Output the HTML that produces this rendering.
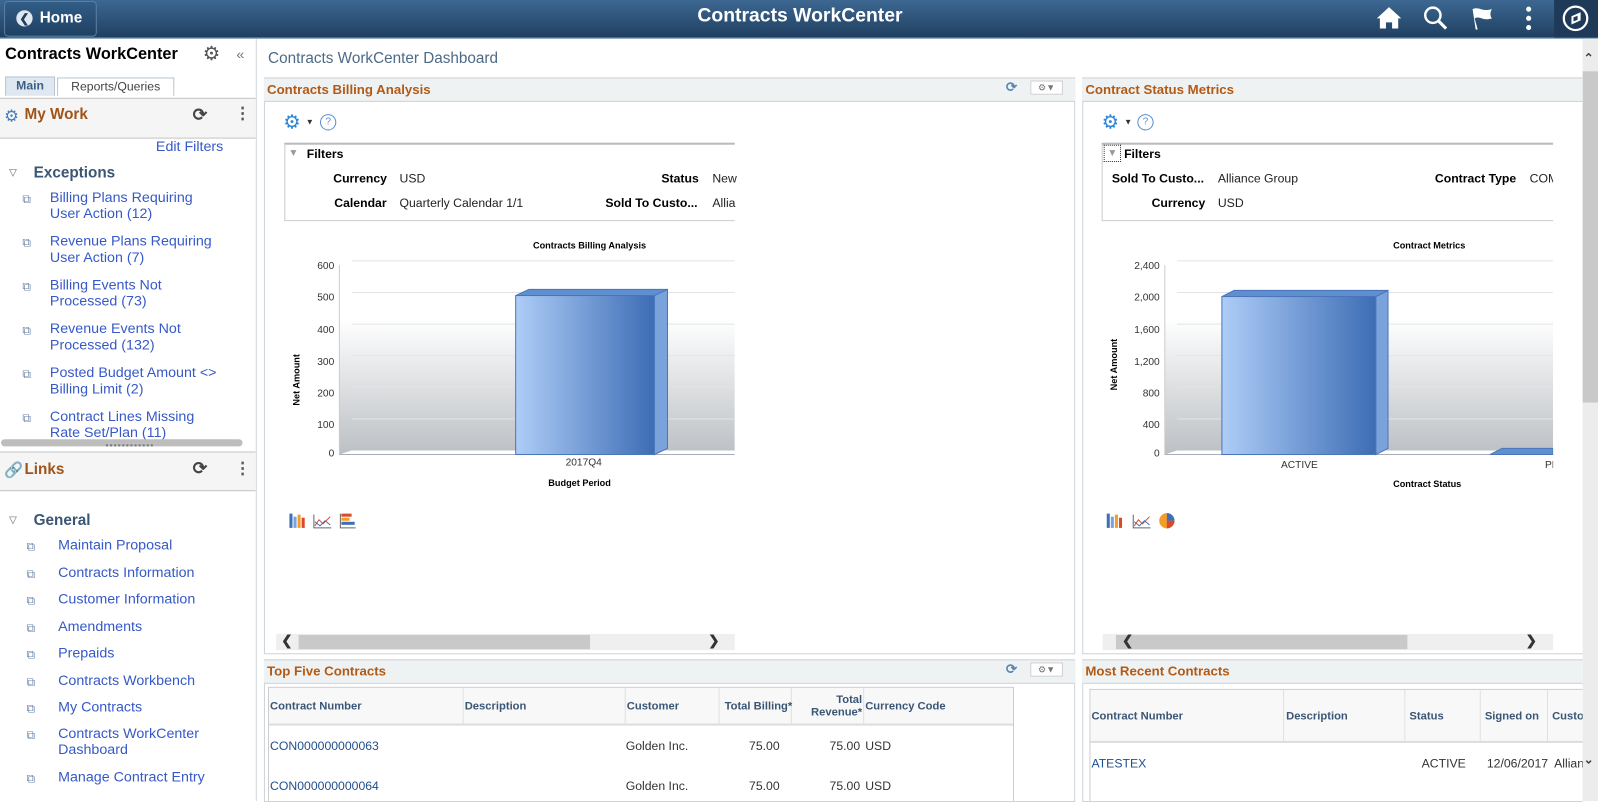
<!DOCTYPE html>
<html><head><meta charset="utf-8">
<style>
*{margin:0;padding:0;box-sizing:border-box}
body{width:1598px;height:786px;overflow:hidden;background:#fff;font-family:"Liberation Sans",Arial,sans-serif;font-size:12px;color:#333;position:relative}
#w{position:absolute;left:0;top:0;width:1568px;height:772px;transform:scale(1.0191);transform-origin:0 0}
.a{position:absolute}
.hdr{left:0;top:0;width:1568px;height:38px;background:linear-gradient(#3d6892,#1f3f60);border-bottom:1px solid #6c8fb0}
.lnk{color:#3659c8;font-size:14px;line-height:16px}
.ph{background:#eff2f3;border-top:1px solid #cfd4d8;border-bottom:1px solid #cfd4d8;color:#b25a15;font-weight:bold;font-size:13px;padding-left:3px;line-height:22px}
.lbl{font-weight:bold;color:#000;font-size:12px}
.v{color:#222;font-size:12px}
.th{font-weight:bold;color:#3a5675;font-size:11px}
.pi{color:#6b86a8;font-size:12px}
</style></head><body><div id="w">
<div class="a hdr"></div>
<div class="a" style="left:4px;top:1px;width:91px;height:35px;border:1px solid #5a7ea3;border-radius:4px;background:linear-gradient(#325d86,#1f4062)"></div>
<div class="a" style="left:16px;top:10px;width:16px;height:16px;border-radius:50%;background:#dfe7ef;color:#1f3f60;font-weight:bold;font-size:12px;line-height:16px;text-align:center">&#10094;</div>
<div class="a" style="left:39px;top:9px;color:#fff;font-weight:bold;font-size:15px">Home</div>
<div class="a" style="left:0;top:5px;width:1570px;text-align:center;color:#fff;font-weight:bold;font-size:19px">Contracts WorkCenter</div>
<svg class="a" style="left:1350px;top:5px" width="26" height="26" viewBox="0 0 26 26"><path d="M13 2L1 13h3v10h6v-6h6v6h6V13h3z" fill="#fff"/></svg>
<svg class="a" style="left:1396px;top:5px" width="26" height="26"><circle cx="10" cy="10" r="7.5" stroke="#fff" stroke-width="2.4" fill="none"/><path d="M15.5 15.5L23 23" stroke="#fff" stroke-width="3"/></svg>
<svg class="a" style="left:1442px;top:5px" width="26" height="26"><path d="M3 4c6-3 9 3 19 0c-2 3-2 7 0 9c-9 3-12-3-17 0L8 24H6L3 4z" fill="#fff"/></svg>
<svg class="a" style="left:1494px;top:5px" width="12" height="26"><circle cx="6" cy="4" r="2.5" fill="#fff"/><circle cx="6" cy="13" r="2.5" fill="#fff"/><circle cx="6" cy="22" r="2.5" fill="#fff"/></svg>
<div class="a" style="left:1525px;top:0;width:73px;height:37px;background:#1e3a58"></div>
<svg class="a" style="left:1532px;top:4px" width="28" height="28"><circle cx="14" cy="14" r="11.5" stroke="#fff" stroke-width="2.2" fill="none"/><path d="M10 20V12L19 8V16Z" fill="#fff"/><path d="M12 17V13L16 11.5V15.5Z" fill="#1e3a58"/></svg>

<!-- left panel -->
<div class="a" style="left:251px;top:38px;width:1px;height:748px;background:#cfd6dc"></div>
<div class="a" style="left:5px;top:45px;font-weight:bold;font-size:16px;color:#000">Contracts WorkCenter</div>
<div class="a" style="left:199px;top:42px;color:#555;font-size:19px">&#9881;</div>
<div class="a" style="left:232px;top:45px;color:#777;font-size:14px">&laquo;</div>
<div class="a" style="left:5px;top:75px;width:49px;height:19px;background:#dfe8f0;border:1px solid #b8c6d3;border-bottom:none;font-weight:bold;color:#3b5f86;text-align:center;line-height:17px">Main</div>
<div class="a" style="left:56px;top:76px;width:115px;height:18px;border:1px solid #b8c6d3;border-bottom:none;color:#444;text-align:center;line-height:16px">Reports/Queries</div>
<div class="a" style="left:0;top:96px;width:251px;height:40px;background:#f5f5f5;border-top:1px solid #c6c6c6;border-bottom:1px solid #c6c6c6"></div>
<div class="a" style="left:4px;top:104px;color:#4a7cb8;font-size:16px">&#9881;</div>
<div class="a" style="left:24px;top:104px;color:#a0541a;font-weight:bold;font-size:15px">My Work</div>
<div class="a" style="left:189px;top:103px;color:#444;font-size:17px;font-weight:bold">&#10227;</div>
<div class="a" style="left:230px;top:102px;color:#555;font-size:16px;font-weight:bold">&#8942;</div>
<div class="a lnk" style="left:153px;top:135px">Edit Filters</div>
<div class="a" style="left:9px;top:164px;color:#666;font-size:10px">&#9661;</div>
<div class="a" style="left:33px;top:161px;font-weight:bold;font-size:15px;color:#3a5675">Exceptions</div>
<div class="a pi" style="left:22px;top:188px">&#10697;</div><div class="a lnk" style="left:49px;top:185px">Billing Plans Requiring<br>User Action (12)</div>
<div class="a pi" style="left:22px;top:231px">&#10697;</div><div class="a lnk" style="left:49px;top:228px">Revenue Plans Requiring<br>User Action (7)</div>
<div class="a pi" style="left:22px;top:274px">&#10697;</div><div class="a lnk" style="left:49px;top:271px">Billing Events Not<br>Processed (73)</div>
<div class="a pi" style="left:22px;top:317px">&#10697;</div><div class="a lnk" style="left:49px;top:314px">Revenue Events Not<br>Processed (132)</div>
<div class="a pi" style="left:22px;top:360px">&#10697;</div><div class="a lnk" style="left:49px;top:357px">Posted Budget Amount &lt;&gt;<br>Billing Limit (2)</div>
<div class="a pi" style="left:22px;top:403px">&#10697;</div><div class="a lnk" style="left:49px;top:400px;height:32px;overflow:hidden">Contract Lines Missing<br>Rate Set/Plan (11)</div>
<div class="a" style="left:1px;top:431px;width:237px;height:7px;border-radius:4px;background:#bdbdbd"></div>
<div class="a" style="left:104px;top:436px;width:46px;border-top:2px dotted #777"></div>
<div class="a" style="left:0;top:443px;width:251px;height:39px;background:#f5f5f5;border-top:1px solid #c6c6c6;border-bottom:1px solid #c6c6c6"></div>
<div class="a" style="left:4px;top:452px;color:#4a7cb8;font-size:15px">&#128279;</div>
<div class="a" style="left:24px;top:452px;color:#a0541a;font-weight:bold;font-size:15px">Links</div>
<div class="a" style="left:189px;top:450px;color:#444;font-size:17px;font-weight:bold">&#10227;</div>
<div class="a" style="left:230px;top:450px;color:#555;font-size:16px;font-weight:bold">&#8942;</div>
<div class="a" style="left:9px;top:505px;color:#666;font-size:10px">&#9661;</div>
<div class="a" style="left:33px;top:502px;font-weight:bold;font-size:15px;color:#3a5675">General</div>
<div class="a pi" style="left:26px;top:529px">&#10697;</div><div class="a lnk" style="left:57px;top:526px">Maintain Proposal</div>
<div class="a pi" style="left:26px;top:556px">&#10697;</div><div class="a lnk" style="left:57px;top:553px">Contracts Information</div>
<div class="a pi" style="left:26px;top:582px">&#10697;</div><div class="a lnk" style="left:57px;top:579px">Customer Information</div>
<div class="a pi" style="left:26px;top:609px">&#10697;</div><div class="a lnk" style="left:57px;top:606px">Amendments</div>
<div class="a pi" style="left:26px;top:635px">&#10697;</div><div class="a lnk" style="left:57px;top:632px">Prepaids</div>
<div class="a pi" style="left:26px;top:662px">&#10697;</div><div class="a lnk" style="left:57px;top:659px">Contracts Workbench</div>
<div class="a pi" style="left:26px;top:688px">&#10697;</div><div class="a lnk" style="left:57px;top:685px">My Contracts</div>
<div class="a pi" style="left:26px;top:714px">&#10697;</div><div class="a lnk" style="left:57px;top:711px">Contracts WorkCenter<br>Dashboard</div>
<div class="a pi" style="left:26px;top:757px">&#10697;</div><div class="a lnk" style="left:57px;top:754px">Manage Contract Entry</div>

<!-- main -->
<div class="a" style="left:263px;top:49px;color:#4e6a86;font-size:15px">Contracts WorkCenter Dashboard</div>
<div class="a" style="left:1553px;top:38px;width:15px;height:748px;background:#ececec"></div>
<div class="a" style="left:1553px;top:70px;width:15px;height:325px;background:#c9c9c9"></div>
<div class="a" style="left:1554px;top:50px;color:#444;font-size:12px;font-weight:bold">&#8963;</div>
<div class="a" style="left:1554px;top:738px;color:#444;font-size:12px;font-weight:bold">&#8964;</div>

<!-- pagelet 1 -->
<div class="a" style="left:259px;top:76px;width:796px;height:566px;border:1px solid #cfd4d8"></div>
<div class="a ph" style="left:259px;top:76px;width:796px;height:24px">Contracts Billing Analysis</div>
<div class="a" style="left:987px;top:78px;color:#5a85b5;font-size:13px;font-weight:bold">&#10227;</div>
<div class="a" style="left:1011px;top:79px;width:32px;height:14px;border:1px solid #d0d0d0;background:#fff;color:#777;font-size:9px;line-height:12px;text-align:center">&#9881;&#9660;</div>
<div class="a" style="left:278px;top:109px;color:#2d86d8;font-size:19px">&#9881;</div>
<div class="a" style="left:300px;top:115px;font-size:8px">&#9660;</div>
<div class="a" style="left:314px;top:112px;width:16px;height:16px;border:1px solid #5a8ed0;border-radius:50%;color:#5a8ed0;font-size:10px;text-align:center;line-height:14px">?</div>
<div class="a" style="left:279px;top:140px;width:442px;height:77px;border:1px solid #ccc;border-top:2px solid #bbb;border-right:none"></div>
<div class="a" style="left:283px;top:145px;color:#999;font-size:10px">&#9660;</div>
<div class="a lbl" style="left:301px;top:144px">Filters</div>
<div class="a lbl" style="left:327px;top:168px">Currency</div><div class="a v" style="left:392px;top:168px">USD</div>
<div class="a lbl" style="left:649px;top:168px">Status</div><div class="a v" style="left:699px;top:168px">New</div>
<div class="a lbl" style="left:328px;top:192px">Calendar</div><div class="a v" style="left:392px;top:192px">Quarterly Calendar 1/1</div>
<div class="a lbl" style="left:594px;top:192px">Sold To Custo...</div><div class="a v" style="left:699px;top:192px">Allia</div>
<svg class="a" style="left:259px;top:230px" width="462" height="260">
<defs><linearGradient id="g1" x1="0" y1="0" x2="0" y2="1"><stop offset="0" stop-color="#fff"/><stop offset=".3" stop-color="#fff"/><stop offset="1" stop-color="#bcc0c4"/></linearGradient>
<linearGradient id="b1" x1="0" x2="1"><stop offset="0" stop-color="#aecdf7"/><stop offset="1" stop-color="#3d6db5"/></linearGradient></defs>
<text x="264" y="14" font-size="9" font-weight="bold" fill="#000" font-family="Liberation Sans">Contracts Billing Analysis</text>
<path d="M74 30L86 26H462V212H86L74 216Z" fill="url(#g1)"/>
<g stroke="#e2e4e6"><line x1="86" y1="26" x2="462" y2="26"/><line x1="86" y1="57" x2="462" y2="57"/><line x1="86" y1="88" x2="462" y2="88"/><line x1="86" y1="119" x2="462" y2="119"/><line x1="86" y1="150" x2="462" y2="150"/><line x1="86" y1="181" x2="462" y2="181"/></g>
<line x1="74" y1="30" x2="74" y2="216" stroke="#ccc"/><line x1="74" y1="216" x2="462" y2="216" stroke="#aab"/>
<g font-size="10" fill="#333" text-anchor="end" font-family="Liberation Sans"><text x="69" y="34">600</text><text x="69" y="65">500</text><text x="69" y="97">400</text><text x="69" y="128">300</text><text x="69" y="159">200</text><text x="69" y="190">100</text><text x="69" y="218">0</text></g>
<path d="M383 60L396 54V210L383 216Z" fill="#7aa3dc" stroke="#4a76b8"/>
<path d="M247 60L260 54H396L383 60Z" fill="#5f8fd1" stroke="#4a76b8"/>
<rect x="247" y="60" width="136" height="156" fill="url(#b1)" stroke="#4a76b8"/>
<text x="296" y="227" font-size="10" fill="#333" font-family="Liberation Sans">2017Q4</text>
<text x="279" y="247" font-size="9" font-weight="bold" fill="#000" font-family="Liberation Sans">Budget Period</text>
<text transform="translate(35,168) rotate(-90)" font-size="9" font-weight="bold" fill="#000" font-family="Liberation Sans">Net Amount</text>
</svg>
<svg class="a" style="left:283px;top:502px" width="70" height="18"><rect x="1" y="2" width="3" height="14" fill="#3c70b8"/><rect x="5" y="5" width="3" height="11" fill="#7aa3dc"/><rect x="9" y="3" width="3" height="13" fill="#f39c2c"/><rect x="13" y="6" width="3" height="10" fill="#d84a2a"/>
<path d="M25 3V16H42" stroke="#666" fill="none"/><path d="M26 14L30 8L34 12L41 5" stroke="#d84a2a" fill="none"/><path d="M26 10L31 14L36 9L41 13" stroke="#3c70b8" fill="none"/>
<rect x="52" y="2" width="10" height="3" fill="#d84a2a"/><rect x="52" y="6" width="8" height="3" fill="#f39c2c"/><rect x="52" y="10" width="13" height="3" fill="#3c70b8"/><path d="M51 2V16H66" stroke="#666" fill="none"/></svg>
<div class="a" style="left:271px;top:622px;width:450px;height:16px;background:#efefef"></div>
<div class="a" style="left:293px;top:623px;width:286px;height:14px;background:#c9c9c9"></div>
<div class="a" style="left:276px;top:621px;font-size:13px;font-weight:bold;color:#333">&#10094;</div>
<div class="a" style="left:695px;top:621px;font-size:13px;font-weight:bold;color:#333">&#10095;</div>

<!-- pagelet 2 -->
<div class="a" style="left:1062px;top:76px;width:491px;height:566px;border:1px solid #cfd4d8;border-right:none"></div>
<div class="a ph" style="left:1062px;top:76px;width:491px;height:24px">Contract Status Metrics</div>
<div class="a" style="left:1081px;top:109px;color:#2d86d8;font-size:19px">&#9881;</div>
<div class="a" style="left:1103px;top:115px;font-size:8px">&#9660;</div>
<div class="a" style="left:1116px;top:112px;width:16px;height:16px;border:1px solid #5a8ed0;border-radius:50%;color:#5a8ed0;font-size:10px;text-align:center;line-height:14px">?</div>
<div class="a" style="left:1081px;top:140px;width:443px;height:77px;border:1px solid #ccc;border-top:2px solid #bbb;border-right:none"></div>
<div class="a" style="left:1083px;top:142px;width:17px;height:17px;border:1px dotted #333;color:#999;font-size:10px;text-align:center;line-height:15px">&#9660;</div>
<div class="a lbl" style="left:1103px;top:144px">Filters</div>
<div class="a lbl" style="left:1091px;top:168px">Sold To Custo...</div><div class="a v" style="left:1195px;top:168px">Alliance Group</div>
<div class="a lbl" style="left:1408px;top:168px">Contract Type</div><div class="a v" style="left:1501px;top:168px;width:23px;overflow:hidden;white-space:nowrap">COM</div>
<div class="a lbl" style="left:1130px;top:192px">Currency</div><div class="a v" style="left:1195px;top:192px">USD</div>
<svg class="a" style="left:1062px;top:230px" width="462" height="260">
<defs><linearGradient id="b2" x1="0" x2="1"><stop offset="0" stop-color="#aecdf7"/><stop offset="1" stop-color="#3d6db5"/></linearGradient></defs>
<text x="305" y="14" font-size="9" font-weight="bold" fill="#000" font-family="Liberation Sans">Contract Metrics</text>
<path d="M81 30L93 26H462V212H93L81 216Z" fill="url(#g1)"/>
<g stroke="#e2e4e6"><line x1="93" y1="26" x2="462" y2="26"/><line x1="93" y1="57" x2="462" y2="57"/><line x1="93" y1="88" x2="462" y2="88"/><line x1="93" y1="119" x2="462" y2="119"/><line x1="93" y1="150" x2="462" y2="150"/><line x1="93" y1="181" x2="462" y2="181"/></g>
<line x1="81" y1="30" x2="81" y2="216" stroke="#ccc"/><line x1="81" y1="216" x2="462" y2="216" stroke="#aab"/>
<g font-size="10" fill="#333" text-anchor="end" font-family="Liberation Sans"><text x="76" y="34">2,400</text><text x="76" y="65">2,000</text><text x="76" y="97">1,600</text><text x="76" y="128">1,200</text><text x="76" y="159">800</text><text x="76" y="190">400</text><text x="76" y="218">0</text></g>
<path d="M288 61L300 55V210L288 216Z" fill="#7aa3dc" stroke="#4a76b8"/>
<path d="M137 61L149 55H300L288 61Z" fill="#5f8fd1" stroke="#4a76b8"/>
<rect x="137" y="61" width="151" height="155" fill="url(#b2)" stroke="#4a76b8"/>
<path d="M400 216L412 210H462V216Z" fill="#5f8fd1" stroke="#4a76b8"/>
<text x="195" y="229" font-size="10" fill="#333" font-family="Liberation Sans">ACTIVE</text>
<text x="454" y="229" font-size="10" fill="#333" font-family="Liberation Sans">PE</text>
<text x="305" y="248" font-size="9" font-weight="bold" fill="#000" font-family="Liberation Sans">Contract Status</text>
<text transform="translate(34,153) rotate(-90)" font-size="9" font-weight="bold" fill="#000" font-family="Liberation Sans">Net Amount</text>
</svg>
<svg class="a" style="left:1085px;top:502px" width="70" height="18"><rect x="1" y="2" width="3" height="14" fill="#3c70b8"/><rect x="5" y="5" width="3" height="11" fill="#7aa3dc"/><rect x="9" y="3" width="3" height="13" fill="#f39c2c"/><rect x="13" y="6" width="3" height="10" fill="#d84a2a"/>
<path d="M27 3V16H44" stroke="#666" fill="none"/><path d="M28 14L32 8L36 12L43 5" stroke="#d84a2a" fill="none"/><path d="M28 10L33 14L38 9L43 13" stroke="#3c70b8" fill="none"/>
<circle cx="60" cy="9" r="7.5" fill="#f39c2c"/><path d="M60 9V1.5A7.5 7.5 0 0 1 67.5 9Z" fill="#3c70b8"/><path d="M60 9H67.5A7.5 7.5 0 0 1 60 16.5Z" fill="#d84a2a"/></svg>
<div class="a" style="left:1082px;top:622px;width:442px;height:16px;background:#efefef"></div>
<div class="a" style="left:1095px;top:623px;width:286px;height:14px;background:#c9c9c9"></div>
<div class="a" style="left:1101px;top:621px;font-size:13px;font-weight:bold;color:#333">&#10094;</div>
<div class="a" style="left:1497px;top:621px;font-size:13px;font-weight:bold;color:#333">&#10095;</div>

<!-- bottom pagelet 1 -->
<div class="a" style="left:259px;top:647px;width:796px;height:140px;border:1px solid #cfd4d8"></div>
<div class="a ph" style="left:259px;top:647px;width:796px;height:24px">Top Five Contracts</div>
<div class="a" style="left:987px;top:649px;color:#5a85b5;font-size:13px;font-weight:bold">&#10227;</div>
<div class="a" style="left:1011px;top:650px;width:32px;height:14px;border:1px solid #d0d0d0;background:#fff;color:#777;font-size:9px;line-height:12px;text-align:center">&#9881;&#9660;</div>
<div class="a" style="left:263px;top:674px;width:732px;height:112px;border:1px solid #ccc;border-bottom:none"></div>
<div class="a" style="left:264px;top:675px;width:730px;height:37px;background:#f8f8f8;border-bottom:2px solid #ddd"></div>
<div class="a" style="left:454px;top:675px;width:1px;height:37px;background:#e0e0e0"></div>
<div class="a" style="left:613px;top:675px;width:1px;height:37px;background:#e0e0e0"></div>
<div class="a" style="left:705px;top:675px;width:1px;height:37px;background:#e0e0e0"></div>
<div class="a" style="left:776px;top:675px;width:1px;height:37px;background:#e0e0e0"></div>
<div class="a" style="left:847px;top:675px;width:1px;height:37px;background:#e0e0e0"></div>
<div class="a th" style="left:265px;top:687px">Contract Number</div>
<div class="a th" style="left:456px;top:687px">Description</div>
<div class="a th" style="left:615px;top:687px">Customer</div>
<div class="a th" style="left:711px;top:687px">Total Billing*</div>
<div class="a th" style="left:790px;top:681px;text-align:right;width:56px;line-height:12px">Total<br>Revenue*</div>
<div class="a th" style="left:849px;top:687px">Currency Code</div>
<div class="a" style="left:265px;top:725px;color:#1f4e8c">CON000000000063</div>
<div class="a" style="left:614px;top:725px">Golden Inc.</div>
<div class="a" style="left:735px;top:725px">75.00</div>
<div class="a" style="left:814px;top:725px">75.00</div>
<div class="a" style="left:849px;top:725px">USD</div>
<div class="a" style="left:265px;top:764px;color:#1f4e8c">CON000000000064</div>
<div class="a" style="left:614px;top:764px">Golden Inc.</div>
<div class="a" style="left:735px;top:764px">75.00</div>
<div class="a" style="left:814px;top:764px">75.00</div>
<div class="a" style="left:849px;top:764px">USD</div>

<!-- bottom pagelet 2 -->
<div class="a" style="left:1062px;top:647px;width:491px;height:140px;border:1px solid #cfd4d8;border-right:none"></div>
<div class="a ph" style="left:1062px;top:647px;width:491px;height:24px">Most Recent Contracts</div>
<div class="a" style="left:1069px;top:676px;width:484px;height:110px;border:1px solid #ccc;border-right:none;border-bottom:none"></div>
<div class="a" style="left:1070px;top:677px;width:483px;height:52px;background:#f8f8f8;border-bottom:2px solid #ddd"></div>
<div class="a" style="left:1259px;top:677px;width:1px;height:52px;background:#e0e0e0"></div>
<div class="a" style="left:1378px;top:677px;width:1px;height:52px;background:#e0e0e0"></div>
<div class="a" style="left:1452px;top:677px;width:1px;height:52px;background:#e0e0e0"></div>
<div class="a" style="left:1518px;top:677px;width:1px;height:52px;background:#e0e0e0"></div>
<div class="a th" style="left:1071px;top:697px">Contract Number</div>
<div class="a th" style="left:1262px;top:697px">Description</div>
<div class="a th" style="left:1383px;top:697px">Status</div>
<div class="a th" style="left:1457px;top:697px">Signed on</div>
<div class="a th" style="left:1523px;top:697px;width:30px;overflow:hidden">Customer</div>
<div class="a" style="left:1071px;top:742px;color:#1f4e8c">ATESTEX</div>
<div class="a" style="left:1395px;top:742px">ACTIVE</div>
<div class="a" style="left:1459px;top:742px">12/06/2017</div>
<div class="a" style="left:1525px;top:742px;width:28px;overflow:hidden;white-space:nowrap">Alliance</div>
</div></body></html>
